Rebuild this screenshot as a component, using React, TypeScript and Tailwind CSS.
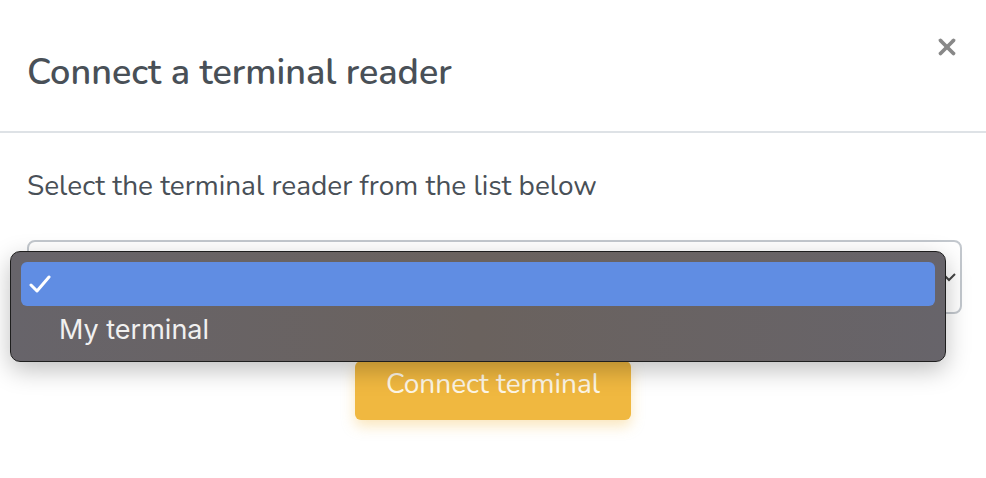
import { X } from 'lucide-react'

export default function App() {
  return (
    <div
      className="relative w-[986px] h-[478px] bg-white overflow-hidden"
      style={{ fontFamily: 'Nunito, Lato, "Open Sans", sans-serif' }}
    >
      {/* Modal header */}
      <div className="relative h-[133px] border-b-2 border-[#dee2e6] flex items-center px-[27px]">
        <h2 className="text-[36px] font-semibold text-[#495057] leading-none pt-[14px]">Connect a terminal reader</h2>
        <button className="absolute right-[26px] top-[34px] text-[#888888]">
          <X className="w-[26px] h-[26px]" strokeWidth={3.5} />
        </button>
      </div>

      {/* Modal body */}
      <div className="px-[27px] pt-[36px]">
        <p className="text-[28px] text-[#495057] leading-[34px]">Select the terminal reader from the list below</p>

        <div className="mt-[37px] h-[74px] w-[935px] rounded-[8px] border-2 border-[#c3c8ce] bg-white relative">
          <svg className="absolute right-[4px] top-[30px]" width="14" height="10" viewBox="0 0 14 10">
            <path d="M1 2 L7 8 L13 2" fill="none" stroke="#444" strokeWidth="2" />
          </svg>
        </div>

        <div className="flex justify-center mt-[47px]">
          <button className="w-[276px] h-[59px] rounded-[6px] bg-[#f0b840] text-[#fdf6e6] text-[28px] leading-none pb-[14px] shadow-[0_6px_14px_rgba(240,184,64,0.35)]">
            Connect terminal
          </button>
        </div>
      </div>

      {/* Native select popup */}
      <div
        className="absolute left-[10px] top-[251px] w-[936px] h-[111px] rounded-[10px] border border-[#1e1e1e] bg-gradient-to-r from-[#67646a] via-[#6a625e] to-[#67646a] shadow-[0_8px_24px_rgba(0,0,0,0.25)] p-[10px]"
        style={{ fontFamily: 'Inter, "Noto Sans", sans-serif' }}
      >
        <div className="h-[44px] rounded-[6px] bg-[#608de3] flex items-center pl-[8px]">
          <svg width="22" height="18" viewBox="0 0 22 18">
            <path d="M2 10 L8 16 L20 2" fill="none" stroke="#ffffff" strokeWidth="3" strokeLinecap="round" strokeLinejoin="round" />
          </svg>
        </div>
        <div className="h-[48px] flex items-center pl-[38px] text-[27px] text-[#f0f0f0]">My terminal</div>
      </div>
    </div>
  )
}
